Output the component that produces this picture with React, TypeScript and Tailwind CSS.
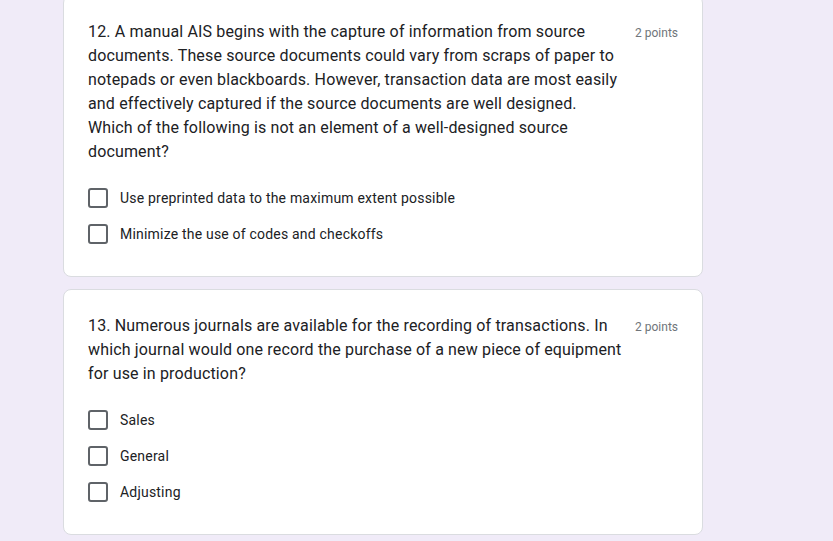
const questions = [
  {
    lines: [
      "12. A manual AIS begins with the capture of information from source",
      "documents. These source documents could vary from scraps of paper to",
      "notepads or even blackboards. However, transaction data are most easily",
      "and effectively captured if the source documents are well designed.",
      "Which of the following is not an element of a well-designed source",
      "document?",
    ],
    options: ["Use preprinted data to the maximum extent possible", "Minimize the use of codes and checkoffs"],
  },
  {
    lines: [
      "13. Numerous journals are available for the recording of transactions. In",
      "which journal would one record the purchase of a new piece of equipment",
      "for use in production?",
    ],
    options: ["Sales", "General", "Adjusting"],
  },
];

function QuestionCard({ lines, options }: { lines: string[]; options: string[] }) {
  return (
    <div className="w-[640px] rounded-lg border border-[#dadce0] bg-white p-6">
      <div className="flex items-start justify-between">
        <div className="text-[16px] leading-6 tracking-[0.15px] text-[#202124]">
          {lines.map((l, i) => (
            <div key={i} className="whitespace-nowrap">{l}</div>
          ))}
        </div>
        <span className="pt-[5px] text-[12px] leading-4 text-[#70757a]">2 points</span>
      </div>
      <div className="mt-4 flex flex-col">
        {options.map((o) => (
          <div key={o} className="flex h-9 items-center gap-3">
            <div className="h-5 w-5 rounded-[3px] border-2 border-[#5f6368]" />
            <span className="text-[14px] leading-5 tracking-[0.2px] text-[#202124]">{o}</span>
          </div>
        ))}
      </div>
    </div>
  );
}

export default function App() {
  return (
    <div className="min-h-[541px] overflow-hidden bg-[#f0ebf8]" style={{ fontFamily: "Roboto, sans-serif" }}>
      <div className="-mt-[5px] ml-[63px] flex flex-col gap-3">
        {questions.map((q, i) => (
          <QuestionCard key={i} lines={q.lines} options={q.options} />
        ))}
      </div>
    </div>
  );
}
